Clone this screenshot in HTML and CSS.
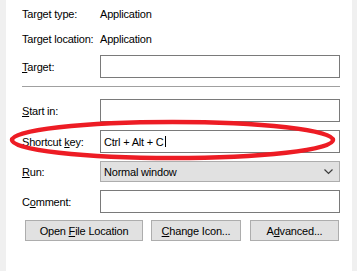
FILE: index.html
```html
<!DOCTYPE html>
<html>
<head>
<meta charset="utf-8">
<link rel="stylesheet" href="styles.css">
</head>
<body>
<div class="panel">
  <div class="row info r1"><span class="label">Target type:</span><span class="value">Application</span></div>
  <div class="row info r2"><span class="label">Target location:</span><span class="value">Application</span></div>
  <div class="row r3"><span class="label"><u>T</u>arget:</span><div class="field"></div></div>
  <div class="sep"></div>
  <div class="row r4"><span class="label"><u>S</u>tart in:</span><div class="field"></div></div>
  <div class="row r5"><span class="label">Shortcut <u>k</u>ey:</span><div class="field"><span>Ctrl + Alt + C</span><span class="caret"></span></div></div>
  <div class="row r6"><span class="label"><u>R</u>un:</span><div class="select"><span>Normal window</span><svg class="chev" width="9" height="6" viewBox="0 0 9 6"><path d="M0.5 0.5 L4.5 4.5 L8.5 0.5" fill="none" stroke="#3c3c3c" stroke-width="1.2"/></svg></div></div>
  <div class="row r7"><span class="label">C<u>o</u>mment:</span><div class="field"></div></div>
  <div class="buttons">
    <div class="btn b1"><span>Open <u>F</u>ile Location</span></div>
    <div class="btn b2"><span><u>C</u>hange Icon...</span></div>
    <div class="btn b3"><span>A<u>d</u>vanced...</span></div>
  </div>
  <svg class="ring" width="357" height="271" viewBox="0 0 357 271"><ellipse cx="172.5" cy="140" rx="160.5" ry="18" fill="none" stroke="#ed1c24" stroke-width="4.5"/></svg>
</div>
</body>
</html>
```
FILE: styles.css
```css
html, body {
  margin: 0;
  padding: 0;
  background: #f0f0f0;
}
body {
  width: 357px;
  height: 271px;
  overflow: hidden;
  font-family: "Liberation Sans", Arial, sans-serif;
  font-size: 11px;
  letter-spacing: -0.2px;
  color: #000;
}
.panel {
  position: relative;
  margin-left: 6px;
  width: 346px;
  height: 271px;
  background: #fff;
  box-sizing: border-box;
  padding: 2px 0 0 16px;
  display: flex;
  flex-direction: column;
}
.row {
  display: flex;
  align-items: center;
}
.label {
  width: 78px;
  flex: none;
  white-space: nowrap;
}
.info { height: 23px; }
.r2 { margin-top: 2px; }
.r3 { margin-top: 5px; }
.sep {
  margin-top: 8px;
  width: 318px;
  height: 1px;
  background: #a0a0a0;
}
.r4 { margin-top: 12px; }
.r5, .r6 { margin-top: 8px; }
.r7 { margin-top: 8px; }
.field {
  width: 240px;
  height: 23px;
  box-sizing: border-box;
  border: 1px solid #7a7a7a;
  background: #fff;
  padding-left: 3px;
  display: flex;
  align-items: center;
}
.caret {
  display: inline-block;
  width: 1px;
  height: 11px;
  background: #000;
  margin-left: 1px;
}
.select {
  width: 240px;
  height: 21px;
  box-sizing: border-box;
  border: 1px solid #adadad;
  background: #e1e1e1;
  padding: 0 6px 0 3px;
  display: flex;
  align-items: center;
  justify-content: space-between;
}
.buttons {
  display: flex;
  margin-top: 7px;
  margin-left: 3px;
}
.btn {
  height: 21px;
  box-sizing: border-box;
  border: 1px solid #adadad;
  background: #e1e1e1;
  display: flex;
  align-items: center;
  justify-content: center;
  white-space: nowrap;
}
.b1 { width: 118px; }
.b2 { width: 90px; margin-left: 8px; }
.b3 { width: 89px; margin-left: 9px; }
.ring {
  position: absolute;
  left: -6px;
  top: 0;
  pointer-events: none;
}
```
